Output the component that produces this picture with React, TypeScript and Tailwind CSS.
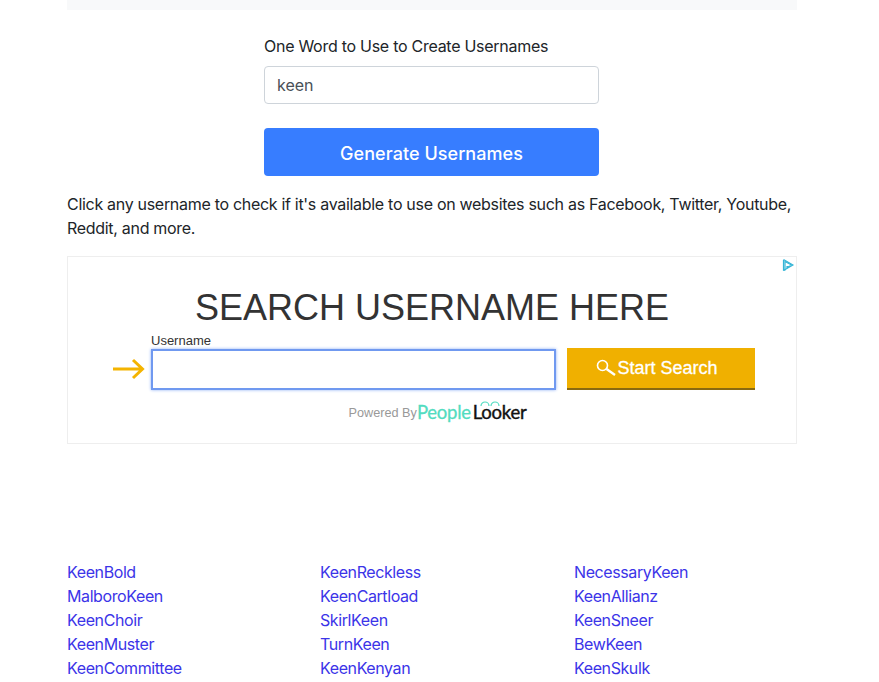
import React from 'react';

const columns = [
  ['KeenBold', 'MalboroKeen', 'KeenChoir', 'KeenMuster', 'KeenCommittee'],
  ['KeenReckless', 'KeenCartload', 'SkirlKeen', 'TurnKeen', 'KeenKenyan'],
  ['NecessaryKeen', 'KeenAllianz', 'KeenSneer', 'BewKeen', 'KeenSkulk'],
];

const arial = { fontFamily: '"Liberation Sans", Arial, sans-serif' };

// Ad section, an embedded banner in the original page
const SearchAd = () => (
  <div
    className="relative mt-[16px] h-[188px] border border-[#eeeeee] flex flex-col items-center"
    style={arial}
  >
    <svg className="absolute top-[1px] right-[1px] w-[14px] h-[14px]" viewBox="0 0 14 14" fill="none">
      <path d="M2.5 2v10l1.5-.1V3.5L10.5 7 6 9.6V8" stroke="#35b5d6" strokeWidth="1.2" />
      <path d="M2.5 1.5 12 7l-9.5 5.5" stroke="#35b5d6" strokeWidth="1.1" />
    </svg>
    <h2 className="mt-[29px] text-[36px] leading-[44px] text-[#333333] whitespace-nowrap">SEARCH USERNAME HERE</h2>
    <div className="self-start ml-[83px] mt-[4px] text-[13px] leading-[14px] text-[#333333]">Username</div>
    <div className="self-start flex items-center ml-[45px]">
      <svg className="w-[32px] h-[22px] mr-[6px]" viewBox="0 0 32 22" fill="none">
        <path d="M0 11h29M20 2 29.5 11 20 20" stroke="#f4b400" strokeWidth="3" />
      </svg>
      <div className="w-[405px] h-[41px] border-2 border-[#7099f0] shadow-[0_0_3px_#8fb0f5]" />
      <button className="ml-[11px] w-[188px] h-[42px] pr-[8px] bg-[#f0b000] border-b-2 border-[#8a6a10] text-white text-[18px] font-normal [-webkit-text-stroke:0.3px_white] flex items-center justify-center">
        <svg className="w-[21px] h-[18px]" viewBox="0 0 21 18" fill="none">
          <circle cx="6.5" cy="6.5" r="5" stroke="#ffffff" strokeWidth="1.6" />
          <path d="M10.5 10 19 16" stroke="#ffffff" strokeWidth="2.4" />
        </svg>
        Start Search
      </button>
    </div>
    <div className="flex items-center mt-[11px] h-[24px] ml-[11px]">
      <span className="pt-[1px] text-[12.7px] text-[#999999]">Powered By</span>
      <span className="relative text-[18.5px] tracking-[-0.25px] flex" style={{ fontFamily: 'Lato, sans-serif' }}>
        <span className="text-[#52dcc0] [-webkit-text-stroke:0.3px_#52dcc0]">People</span>
        <span className="ml-[2px] text-[#111111] [-webkit-text-stroke:0.4px_#111111]">Looker</span>
        <svg className="absolute left-[63px] top-[2px] w-[20px] h-[6px]" viewBox="0 0 20 6" fill="none">
          <path d="M1 5a4 4 0 0 1 8 0M11 5a4 4 0 0 1 8 0" stroke="#52dcc0" strokeWidth="1.2" />
        </svg>
      </span>
    </div>
  </div>
);

export default function App() {
  return (
    <div className="h-[682px] overflow-hidden bg-white text-[#212529]" style={{ fontFamily: 'Inter, sans-serif' }}>
      <div className="w-[730px] ml-[67px]">
        <div className="h-[10px] bg-[#f8f9fa]" />

        <form className="w-[335px] ml-[197px] mt-[24px]">
          <label className="block text-[16px] leading-[24px] tracking-[-0.27px]">One Word to Use to Create Usernames</label>
          <input
            readOnly
            value="keen"
            className="block mt-[8px] w-full h-[38px] px-[12px] border border-[#ced4da] rounded-[4px] text-[16px] text-[#495057] outline-none"
          />
          <button
            type="button"
            className="block mt-[24px] w-full h-[48px] pt-[2px] rounded-[4px] bg-[#377dff] text-white text-[18px] font-medium tracking-[0.05px]"
          >
            Generate Usernames
          </button>
        </form>

        <p className="mt-[16px] text-[16px] leading-[24px] tracking-[-0.3px]">
          Click any username to check if it's available to use on websites such as Facebook, Twitter, Youtube, Reddit, and more.
        </p>

        <SearchAd />

        <div className="grid grid-cols-[253px_254px_1fr] mt-[116px]">
          {columns.map((names) => (
            <ul key={names[0]}>
              {names.map((name) => (
                <li key={name} className="text-[16px] leading-[24px] tracking-[-0.4px] text-[#3b34e8]">
                  <a href="#">{name}</a>
                </li>
              ))}
            </ul>
          ))}
        </div>
      </div>
    </div>
  );
}
